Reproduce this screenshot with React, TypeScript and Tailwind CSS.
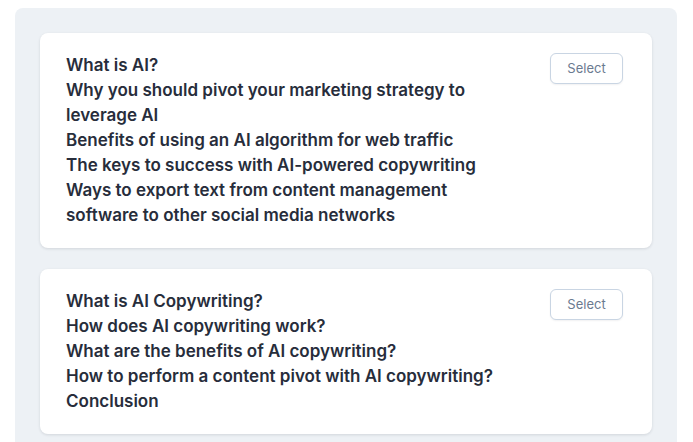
import React from 'react'

const outlines: string[][] = [
  [
    'What is AI?',
    'Why you should pivot your marketing strategy to leverage AI',
    'Benefits of using an AI algorithm for web traffic',
    'The keys to success with AI-powered copywriting',
    'Ways to export text from content management software to other social media networks',
  ],
  [
    'What is AI Copywriting?',
    'How does AI copywriting work?',
    'What are the benefits of AI copywriting?',
    'How to perform a content pivot with AI copywriting?',
    'Conclusion',
  ],
]

const OutlineCard: React.FC<{ items: string[] }> = ({ items }) => {
  return (
    <div className="flex items-start justify-between rounded-lg bg-white pl-[26px] pr-[29px] pt-[20px] pb-[20px] shadow-[0_1px_3px_rgba(15,23,42,0.12)]">
      <div className="w-[450px] text-[17px] font-semibold leading-[25px] text-[#272d3b]">
        {items.map((t) => (
          <p key={t}>{t}</p>
        ))}
      </div>
      <button className="h-[31px] w-[73px] rounded-md border border-[#c9d5e3] bg-white text-[13px] text-[#6b7a90] shadow-[0_1px_2px_rgba(15,23,42,0.06)]">
        Select
      </button>
    </div>
  )
}

export default function App() {
  return (
    <div className="h-[442px] w-[693px] overflow-hidden bg-white pl-[15px] pr-[16px] pt-[8px]" style={{ fontFamily: 'Inter, "Noto Sans", sans-serif' }}>
      <div className="flex h-[460px] flex-col gap-[21px] rounded-lg bg-[#edf1f5] px-[25px] pt-[25px]">
        {outlines.map((items, i) => (
          <OutlineCard key={i} items={items} />
        ))}
      </div>
    </div>
  )
}
